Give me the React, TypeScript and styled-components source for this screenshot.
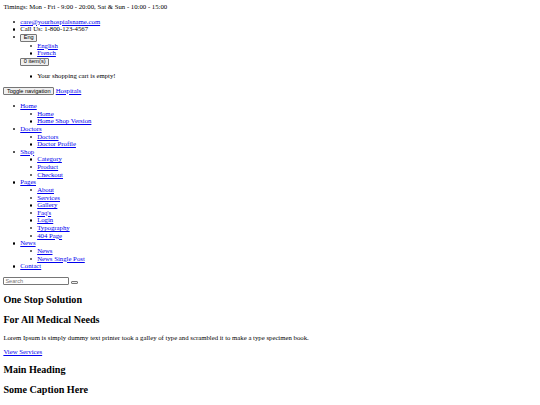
import styled, { createGlobalStyle } from 'styled-components';

// reference is a bare, unstyled page shot at 1280 wide and shrunk to 540,
// so every browser default here is multiplied by 0.421875
const GlobalStyle = createGlobalStyle`
  body {
    margin: 3.375px;
    font-family: 'Liberation Serif', 'Times New Roman', serif;
    font-size: 6.75px;
    line-height: 7.62px;
    color: #000;
    background: #fff;
  }
`;

const Timings = styled.div``;

const List = styled.ul<{ $nested?: boolean }>`
  list-style: none;
  margin: ${({ $nested }) => ($nested ? '0' : '6.75px 0')};
  padding-left: 16.875px;
`;

const Item = styled.li<{ $bullet?: 'disc' | 'circle' }>`
  position: relative;

  &::before {
    content: '';
    position: absolute;
    left: -7.6px;
    top: 3.05px;
    width: 2.3px;
    height: 2.3px;
    box-sizing: border-box;
    border-radius: 50%;
    background: ${({ $bullet }) => ($bullet === 'circle' ? 'transparent' : '#000')};
    border: 0.45px solid #000;
  }
`;

const Link = styled.a`
  color: #0000ee;
  text-decoration: underline;
  text-decoration-thickness: 0.45px;
  text-underline-offset: 0.8px;
`;

const Button = styled.button`
  font-family: 'Liberation Sans', Arial, sans-serif;
  font-size: 5.625px;
  line-height: 5.3px;
  color: #000;
  background: #efefef;
  border: 0.45px solid #767676;
  border-radius: 1px;
  padding: 0.35px 2.5px;
  margin: 0;
  vertical-align: baseline;
`;

const EmptyButton = styled(Button)`
  width: 6.75px;
  height: 2.6px;
  padding: 0;
`;

const CartText = styled.p`
  margin: 6.75px 0;
`;

const NavBar = styled.div``;

const SearchForm = styled.form``;

const SearchInput = styled.input`
  box-sizing: border-box;
  width: 66px;
  height: 8.6px;
  font-family: 'Liberation Sans', Arial, sans-serif;
  font-size: 5.625px;
  padding: 0 1px;
  margin: 0;
  border: 0.45px solid #767676;
  border-radius: 1px;

  &::placeholder {
    color: #757575;
  }
`;

const Heading = styled.h2`
  font-size: 10.125px;
  line-height: 11.64px;
  font-weight: bold;
  margin: 8.4px 0;
`;

const Text = styled.p`
  margin: 6.75px 0;
`;

const menu: { title: string; items: string[] }[] = [
  { title: 'Home', items: ['Home', 'Home Shop Version'] },
  { title: 'Doctors', items: ['Doctors', 'Doctor Profile'] },
  { title: 'Shop', items: ['Category', 'Product', 'Checkout'] },
  {
    title: 'Pages',
    items: ['About', 'Services', 'Gallery', "Faq's", 'Login', 'Typography', '404 Page'],
  },
  { title: 'News', items: ['News', 'News Single Post'] },
  { title: 'Contact', items: [] },
];

const lorem =
  'Lorem Ipsum is simply dummy text printer took a galley of type and scrambled it to make a type specimen book.';

const App = () => {
  return (
    <>
      <GlobalStyle />
      <Timings>Timings: Mon - Fri - 9:00 - 20:00, Sat &amp; Sun - 10:00 - 15:00</Timings>
      <List>
        <Item>
          <Link href="#">care@yourhospialsname.com</Link>
        </Item>
        <Item>Call Us: 1-800-123-4567</Item>
        <Item>
          <Button type="button">Eng</Button>
          <List $nested>
            <Item $bullet="circle">
              <Link href="#">English</Link>
            </Item>
            <Item $bullet="circle">
              <Link href="#">French</Link>
            </Item>
          </List>
          <Button type="button">0 item(s)</Button>
          <List $nested>
            <Item $bullet="circle">
              <CartText>Your shopping cart is empty!</CartText>
            </Item>
          </List>
        </Item>
      </List>
      <NavBar>
        <Button type="button">Toggle navigation</Button> <Link href="#">Hospitals</Link>
      </NavBar>
      <List>
        {menu.map((group) => (
          <Item key={group.title}>
            <Link href="#">{group.title}</Link>
            {group.items.length > 0 && (
              <List $nested>
                {group.items.map((label) => (
                  <Item key={label} $bullet="circle">
                    <Link href="#">{label}</Link>
                  </Item>
                ))}
              </List>
            )}
          </Item>
        ))}
      </List>
      <SearchForm onSubmit={(e) => e.preventDefault()}>
        <SearchInput type="text" placeholder="Search" /> <EmptyButton type="submit" />
      </SearchForm>
      <Heading>One Stop Solution</Heading>
      <Heading>For All Medical Needs</Heading>
      <Text>{lorem}</Text>
      <Text>
        <Link href="#">View Services</Link>
      </Text>
      <Heading>Main Heading</Heading>
      <Heading>Some Caption Here</Heading>
      <Text>{lorem}</Text>
    </>
  );
};

export default App;
